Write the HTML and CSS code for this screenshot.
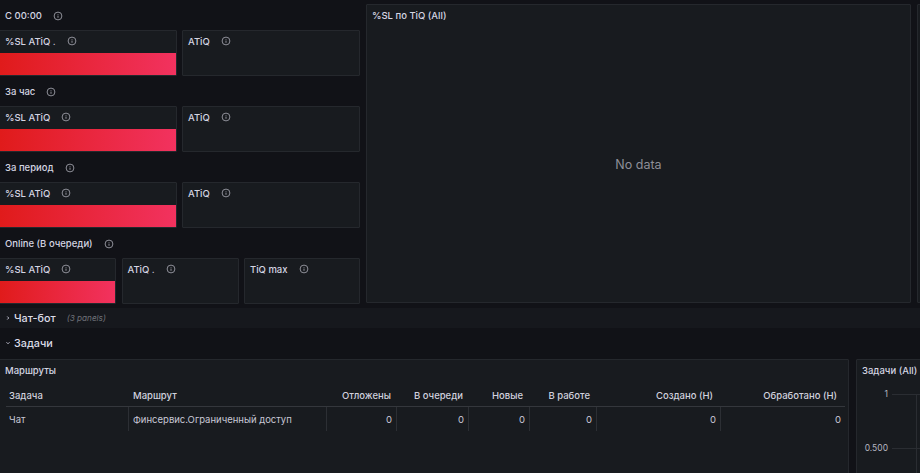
FILE: index.html
```html
<!DOCTYPE html>
<html lang="ru">
<head>
<meta charset="utf-8">
<title>Dashboard</title>
<link rel="stylesheet" href="styles.css">
</head>
<body>
<svg class="defs" width="0" height="0" aria-hidden="true">
  <symbol id="info" viewBox="0 0 10 10">
    <circle cx="5" cy="5" r="3.9" fill="none" stroke="currentColor" stroke-width="1"/>
    <path d="M5 4.6v2.2M5 3v.7" fill="none" stroke="currentColor" stroke-width="1"/>
  </symbol>
</svg>
<div class="top">
  <div class="left">
    <section class="group">
      <h3 class="heading">С 00:00 <svg class="i gap-h1"><use href="#info"/></svg></h3>
      <div class="row two">
        <div class="panel"><div class="ptitle"><span>%SL ATiQ .</span><svg class="i"><use href="#info"/></svg></div><div class="bar"></div></div>
        <div class="panel"><div class="ptitle"><span>ATiQ</span><svg class="i"><use href="#info"/></svg></div></div>
      </div>
    </section>
    <section class="group">
      <h3 class="heading">За час <svg class="i gap-h1"><use href="#info"/></svg></h3>
      <div class="row two">
        <div class="panel"><div class="ptitle"><span>%SL ATiQ</span><svg class="i"><use href="#info"/></svg></div><div class="bar"></div></div>
        <div class="panel"><div class="ptitle"><span>ATiQ</span><svg class="i"><use href="#info"/></svg></div></div>
      </div>
    </section>
    <section class="group">
      <h3 class="heading">За период <svg class="i gap-h1"><use href="#info"/></svg></h3>
      <div class="row two">
        <div class="panel"><div class="ptitle"><span>%SL ATiQ</span><svg class="i"><use href="#info"/></svg></div><div class="bar"></div></div>
        <div class="panel"><div class="ptitle"><span>ATiQ</span><svg class="i"><use href="#info"/></svg></div></div>
      </div>
    </section>
    <section class="group">
      <h3 class="heading">Online (В очереди) <svg class="i gap-h1"><use href="#info"/></svg></h3>
      <div class="row three">
        <div class="panel"><div class="ptitle"><span>%SL ATiQ</span><svg class="i"><use href="#info"/></svg></div><div class="bar"></div></div>
        <div class="panel"><div class="ptitle"><span>ATiQ .</span><svg class="i"><use href="#info"/></svg></div></div>
        <div class="panel"><div class="ptitle"><span>TiQ max</span><svg class="i"><use href="#info"/></svg></div></div>
      </div>
    </section>
  </div>
  <div class="panel big">
    <div class="ptitle">%SL по TiQ (All)</div>
    <div class="nodata">No data</div>
  </div>
  <div class="panel sliver"></div>
</div>
<div class="collapsed">
  <svg class="chev" viewBox="0 0 8 8"><path d="M3 2l2 2-2 2" fill="none" stroke="currentColor" stroke-width="1.2"/></svg>
  <span class="rowname">Чат-бот</span><em class="count">(3 panels)</em>
</div>
<div class="expanded">
  <svg class="chev" viewBox="0 0 8 8"><path d="M2 3l2 2 2-2" fill="none" stroke="currentColor" stroke-width="1.2"/></svg>
  <span class="rowname">Задачи</span>
</div>
<div class="bottom">
  <div class="panel tablepanel">
    <div class="ptitle">Маршруты</div>
    <div class="table">
      <div class="th">Задача</div><div class="th">Маршрут</div><div class="th num">Отложены</div><div class="th num">В очереди</div><div class="th num">Новые</div><div class="th num">В работе</div><div class="th num">Создано (Н)</div><div class="th num">Обработано (Н)</div>
      <div class="td">Чат</div><div class="td">Финсервис.Ограниченный доступ</div><div class="td num">0</div><div class="td num">0</div><div class="td num">0</div><div class="td num">0</div><div class="td num">0</div><div class="td num">0</div>
    </div>
  </div>
  <div class="panel chart">
    <div class="ptitle">Задачи (All)</div>
    <div class="plot">
      <div class="tick t1"><span>1</span><i></i></div>
      <div class="tick t2"><span>0.500</span><i></i></div>
      <b class="vline"></b>
    </div>
  </div>
</div>
</body>
</html>
```
FILE: styles.css
```css
* { box-sizing: border-box; }
html, body { margin: 0; height: 473px; overflow: hidden; }
body {
  background: #111217;
  color: #ccccdc;
  font-family: Inter, "Liberation Sans", sans-serif;
  font-size: 10px;
  padding-top: 4px;
}
.defs { position: absolute; }
.top { display: flex; height: 300px; gap: 6px; }
.left { width: 360px; flex: none; }
.group { height: 76px; }
.heading {
  margin: 0;
  height: 26px;
  padding: 0 0 3px 5px;
  font-size: 9.5px;
  line-height: 12px;
  font-weight: 550;
  color: #d4d5e2;
  display: flex;
  align-items: center;
}
.gap-h1 { margin-left: 11px; }
.row { display: grid; height: 46px; margin-left: -1px; }
.two { grid-template-columns: 178px 178px; gap: 5px; }
.three { grid-template-columns: 117px 117px 116px; gap: 5.5px; }
.panel {
  background: #181b1f;
  border: 1px solid #25282d;
  border-radius: 1px;
  position: relative;
  overflow: hidden;
  display: flex;
  flex-direction: column;
}
.ptitle {
  height: 22px;
  padding: 0 5px 2px 5px;
  flex: none;
  display: flex;
  align-items: center;
  gap: 11px;
  font-size: 9.5px;
  font-weight: 550;
  color: #d4d5e2;
}
.i { width: 10px; height: 10px; flex: none; color: #8e8f98; }
.bar { flex: 1; background: linear-gradient(90deg, #e01b1b 0%, #f2325f 100%); }
.big { flex: none; width: 545px; height: 299px; }
.nodata {
  flex: 1;
  display: flex;
  align-items: center;
  justify-content: center;
  font-size: 12.5px;
  color: #8e8f98;
}
.sliver { flex: 1; height: 299px; margin-right: -10px; }
.collapsed, .expanded { display: flex; align-items: center; }
.collapsed { height: 20px; margin-top: 4px; background: #16181d; padding-left: 5px; }
.expanded { height: 23px; margin-top: 4px; padding: 0 0 1px 5px; }
.chev { width: 6px; height: 8px; color: #ccccdc; flex: none; }
.rowname { margin-left: 3px; font-size: 10.8px; font-weight: 550; color: #dcdde8; }
.count { margin-left: 11px; font-size: 8.2px; color: #6e7078; }
.bottom { display: flex; gap: 7px; margin-top: 4px; height: 130px; }
.tablepanel { width: 850px; margin-left: -1px; flex: none; }
.table {
  margin: 3px 0 0 6px;
  width: 839px;
  display: grid;
  grid-template-columns: 123px 198px 70px 72px 61px 67px 124px 124px;
  font-size: 9.5px;
}
.th {
  height: 22px;
  padding: 0 6px 0 4px;
  display: flex;
  align-items: center;
  font-weight: 500;
  color: #d0d1de;
  border-bottom: 1px solid #34373c;
}
.th:first-child, .td:nth-child(9) { padding-left: 3px; }
.th:nth-child(n+5) { padding-right: 7px; }
.th:nth-child(n+7) { padding-right: 8px; }
.td {
  height: 24px;
  padding: 0 4px;
  display: flex;
  align-items: center;
  border-right: 1px solid #2c2f34;
  color: #c8c8d6;
}
.td:last-child { border-right: 0; }
.num { justify-content: flex-end; }
.chart { flex: 1; margin-right: -10px; }
.plot { position: relative; flex: 1; }
.tick { position: absolute; left: 0; width: 100%; display: flex; align-items: center; height: 10px; }
.tick span { width: 31px; text-align: right; font-size: 8.5px; color: #b4b5c0; flex: none; }
.tick i { margin-left: 4px; flex: 1; height: 1px; background: #2a2d32; }
.t1 { top: 7px; }
.t2 { top: 61px; }
.vline { position: absolute; left: 59px; top: 12px; bottom: 0; width: 1px; background: #2a2d32; }
```
